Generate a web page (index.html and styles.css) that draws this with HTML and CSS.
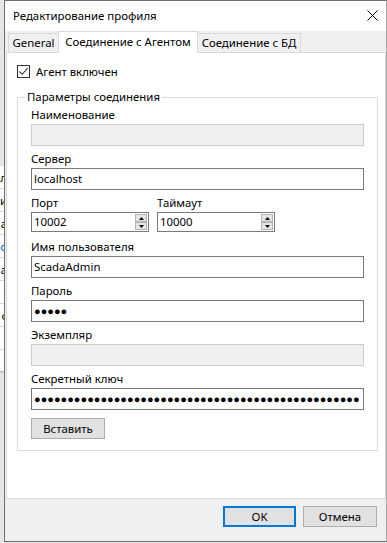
FILE: index.html
```html
<!DOCTYPE html>
<html lang="ru">
<head>
<meta charset="utf-8">
<title>Редактирование профиля</title>
<link rel="stylesheet" href="styles.css">
</head>
<body>
<div class="desk">
  <div class="bgwin">
    <div class="bgrow"><span>л</span></div>
    <div class="bgrow"><span>и</span></div>
    <div class="bgrow"><span>а</span></div>
    <div class="bgrow blue"><span>о</span></div>
    <div class="bgrow"><span>а</span></div>
    <div class="bgrow"><span></span></div>
    <div class="bgrow"><span>с</span></div>
    <div class="bgrow"><span></span></div>
    <div class="bgrow"><span></span></div>
  </div>

  <div class="window">
    <div class="titlebar">
      <span class="title">Редактирование профиля</span>
      <svg class="close" width="11" height="11" viewBox="0 0 11 11"><path d="M0.5 0.5L10.5 10.5M10.5 0.5L0.5 10.5" stroke="#000" stroke-width="1"/></svg>
    </div>
    <div class="client">
      <div class="tabs">
        <div class="tab first">General</div>
        <div class="tab active">Соединение с Агентом</div>
        <div class="tab last">Соединение с БД</div>
      </div>
      <div class="page">
        <label class="check">
          <span class="box"><svg width="11" height="11" viewBox="0 0 11 11"><path d="M1.5 5.5L4.2 8.3L9.6 2.2" fill="none" stroke="#333" stroke-width="1.1"/></svg></span>
          <span>Агент включен</span>
        </label>
        <fieldset class="group">
          <legend>Параметры соединения</legend>
          <div class="field">
            <div class="lbl">Наименование</div>
            <div class="input disabled"></div>
          </div>
          <div class="field">
            <div class="lbl">Сервер</div>
            <div class="input">localhost</div>
          </div>
          <div class="field pair">
            <div class="sub">
              <div class="lbl">Порт</div>
              <div class="spinbox">
                <span class="val">10002</span>
                <span class="spin">
                  <span class="sbtn"><svg width="5" height="3" viewBox="0 0 5 3"><path d="M2.5 0L5 3H0Z" fill="#000"/></svg></span>
                  <span class="sbtn"><svg width="5" height="3" viewBox="0 0 5 3"><path d="M0 0H5L2.5 3Z" fill="#000"/></svg></span>
                </span>
              </div>
            </div>
            <div class="sub">
              <div class="lbl">Таймаут</div>
              <div class="spinbox">
                <span class="val">10000</span>
                <span class="spin">
                  <span class="sbtn"><svg width="5" height="3" viewBox="0 0 5 3"><path d="M2.5 0L5 3H0Z" fill="#000"/></svg></span>
                  <span class="sbtn"><svg width="5" height="3" viewBox="0 0 5 3"><path d="M0 0H5L2.5 3Z" fill="#000"/></svg></span>
                </span>
              </div>
            </div>
          </div>
          <div class="field">
            <div class="lbl">Имя пользователя</div>
            <div class="input">ScadaAdmin</div>
          </div>
          <div class="field">
            <div class="lbl">Пароль</div>
            <div class="input"><span class="dots">●●●●●</span></div>
          </div>
          <div class="field">
            <div class="lbl">Экземпляр</div>
            <div class="input disabled"></div>
          </div>
          <div class="field">
            <div class="lbl">Секретный ключ</div>
            <div class="input"><span class="dots">●●●●●●●●●●●●●●●●●●●●●●●●●●●●●●●●●●●●●●●●●●●●●●●●●</span></div>
          </div>
          <button class="btn paste">Вставить</button>
        </fieldset>
      </div>
      <div class="footer">
        <button class="btn ok">OK</button>
        <button class="btn cancel">Отмена</button>
      </div>
    </div>
  </div>
</div>
</body>
</html>
```

FILE: styles.css
```css
* { box-sizing: border-box; }
html, body { margin: 0; padding: 0; }
body {
  width: 387px;
  height: 543px;
  overflow: hidden;
  background: #e6e6e6;
  font-family: "Noto Sans", "Open Sans", sans-serif;
  font-size: 11.4px;
  color: #000;
}
.desk { position: relative; width: 387px; height: 543px; }

/* background window peeking at the left edge */
.bgwin {
  position: absolute;
  left: -96px;
  top: 166px;
  width: 100px;
  height: 206px;
  background: #fff;
  border-bottom: 1px solid #b5b5b5;
}
.bgrow {
  height: 23px;
  border-bottom: 1px solid #d6d6d6;
  display: flex;
  align-items: center;
  justify-content: flex-end;
  margin-right: -3px;
  white-space: nowrap;
}
.bgrow.blue { color: #0066cc; }

.window {
  position: absolute;
  left: 4px;
  top: 0;
  width: 383px;
  height: 542px;
  border: 1px solid #6e6e6e;
  border-right-color: #a8a8a8;
  background: #f0f0f0;
  display: flex;
  flex-direction: column;
}
.titlebar {
  height: 30px;
  flex: none;
  background: #fff;
  display: flex;
  align-items: center;
  justify-content: space-between;
  padding: 0 8px 1px 8px;
}
.title { line-height: 16px; }

.client {
  flex: 1;
  display: flex;
  flex-direction: column;
}
.tabs {
  height: 21px;
  flex: none;
  display: flex;
  align-items: flex-end;
  padding-left: 3px;
}
.tab {
  height: 19px;
  display: flex;
  align-items: center;
  justify-content: center;
  background: #f0f0f0;
  border-top: 1px solid #d9d9d9;
  white-space: nowrap;
  line-height: 16px;
}
.tab.first { width: 50px; border-left: 1px solid #d9d9d9; }
.tab.last { width: 103px; border-right: 1px solid #d9d9d9; }
.tab.active {
  width: 140px;
  height: 22px;
  margin-bottom: -1px;
  position: relative;
  z-index: 1;
  background: #fff;
  border: 1px solid #d9d9d9;
  border-bottom: none;
  padding-bottom: 1px;
}

.page {
  height: 447px;
  flex: none;
  margin-left: 1px;
  background: #fff;
  border: 1px solid #d9d9d9;
  padding: 12px 7px 0 10px;
}
.check {
  display: flex;
  align-items: center;
  gap: 6px;
  height: 13px;
  line-height: 16px;
}
.box {
  width: 13px;
  height: 13px;
  border: 1px solid #333;
  background: #fff;
  display: flex;
  align-items: center;
  justify-content: center;
}
.box svg { display: block; }

.group {
  margin: 12px 0 0 0;
  border: 1px solid #dcdcdc;
  padding: 3px 13px 11px 13px;
  min-width: 0;
}
.group legend {
  padding: 0 2px;
  margin-left: -6px;
  line-height: 14px;
}
.field { margin-bottom: 5px; }
.lbl { line-height: 16px; height: 16px; margin-bottom: 1px; white-space: nowrap; }
.input {
  height: 22px;
  border: 1px solid #7a7a7a;
  background: #fff;
  padding: 0 2px;
  display: flex;
  align-items: center;
  line-height: 16px;
  white-space: nowrap;
  overflow: hidden;
}
.input.disabled { background: #f0f0f0; border-color: #cccccc; }
.dots {
  font-family: "Liberation Sans", Arial, sans-serif;
  font-size: 11px;
  letter-spacing: 0;
  line-height: 12px;
  padding-left: 0;
  flex: none;
}
.pair { display: flex; gap: 8px; height: 39px; }
.sub { width: 118px; }
.spinbox {
  height: 20px;
  border: 1px solid #7a7a7a;
  display: flex;
  align-items: center;
  padding-left: 2px;
  background: #fff;
}
.val { flex: 1; line-height: 16px; }
.spin {
  width: 12px;
  height: 18px;
  display: flex;
  flex-direction: column;
  margin-right: 1px;
  padding: 1px 0;
}
.sbtn {
  flex: 1;
  background: #e5e5e5;
  border: 1px solid #b4b4b4;
  display: flex;
  align-items: center;
  justify-content: center;
}
.sbtn svg { display: block; }

.btn {
  font-family: inherit;
  font-size: 11.4px;
  color: #000;
  height: 21px;
  margin: 0;
  padding: 0;
  border: 1px solid #adadad;
  background: #e1e1e1;
  line-height: 16px;
}
.paste { width: 74px; margin-top: 8px; display: block; }
.footer {
  flex: 1;
  display: flex;
  justify-content: flex-end;
  align-items: flex-start;
  gap: 7px;
  padding: 7px 9px 0 0;
}
.ok { width: 73px; border: 2px solid #0078d7; }
.cancel { width: 74px; }
```
